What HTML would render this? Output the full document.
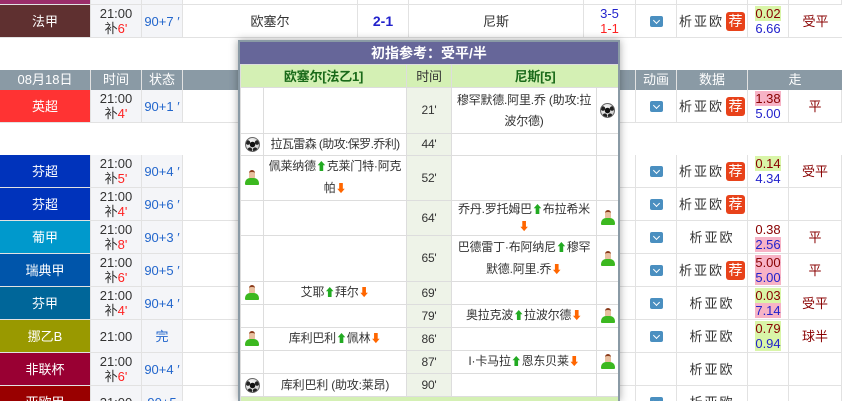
<!DOCTYPE html>
<html><head><meta charset="utf-8"><style>
*{margin:0;padding:0;box-sizing:border-box}
html,body{width:842px;height:401px;overflow:hidden}
body{background:#fff;font-family:"Liberation Sans","Noto Sans CJK SC",sans-serif;font-size:13px;color:#333;position:relative}
.r{position:absolute;left:0;width:842px;border-bottom:1px solid #e2e2e2;background:#fff}
.c{position:absolute;top:0;height:100%;border-right:1px solid #e2e2e2;display:flex;align-items:center;justify-content:center;text-align:center;line-height:15px}
.c>div{white-space:nowrap}
.lg{left:0;width:91px;color:#fff}
.tm{left:91px;width:51px;background:#f4f5f8}
.st{left:142px;width:41px;color:#2266cc;background:#f4f5f8}
.hm{left:183px;width:175px}
.sc{left:358px;width:51px}
.aw{left:409px;width:175px}
.hf{left:584px;width:52px}
.an{left:636px;width:41px}
.da{left:677px;width:71px;letter-spacing:2px}
.od{left:748px;width:41px}
.hc{left:789px;width:53px}
.red{color:#f22}
.dd{display:inline-block;width:13px;height:11px;background:#4a8fc0;border-radius:2px;position:relative;vertical-align:middle}
.dd:after{content:"";position:absolute;left:4px;top:2px;width:4px;height:4px;border-right:1.5px solid #fff;border-bottom:1.5px solid #fff;transform:rotate(45deg)}
.jian{display:inline-block;background:#e8421a;color:#fff;border-radius:3px;width:19px;height:19px;line-height:19px;font-size:14px;letter-spacing:0;margin-left:2px}
.o1{color:#800}.o2{color:#22c}
.gy{background:#d9f5a8}.pk{background:#f7b3c6}
.hd{position:absolute;top:70px;left:0;width:842px;height:20px;background:#8a9aa5;color:#fff}
.hd div{position:absolute;top:0;height:20px;line-height:20px;text-align:center;border-right:1px solid #e2e2e2}
#pop{position:absolute;left:238px;top:40px;width:382px;height:361px;border:2px solid #8a9aa5;border-bottom:none;background:#fff;box-shadow:0 0 8px rgba(0,0,0,.35);overflow:hidden}
#pop table{border-collapse:collapse;width:378px;table-layout:fixed;font-size:12px;letter-spacing:-0.2px}
#pop td{border:1px solid #ddd;text-align:center;line-height:21px;padding:0;overflow:hidden}
.tt{height:22px;background:#666699;color:#fff;font-weight:bold;text-align:center;line-height:22px;font-size:14px}
.ph td{background:#d4f0b4;color:#1a6a1a;font-weight:bold;height:23px;font-size:13px}
.tc{background:#eef3e8}
.ball{display:inline-block;width:15px;height:15px;border-radius:50%;background:radial-gradient(circle at 50% 50%,#111 0 2.5px,transparent 3px),radial-gradient(circle at 15% 35%,#222 0 2px,transparent 2.5px),radial-gradient(circle at 85% 35%,#222 0 2px,transparent 2.5px),radial-gradient(circle at 30% 90%,#222 0 2px,transparent 2.5px),radial-gradient(circle at 70% 90%,#222 0 2px,transparent 2.5px),radial-gradient(circle at 40% 35%,#fff,#bbb);border:1px solid #666;vertical-align:middle}
.pl{display:inline-block;width:14px;height:16px;position:relative;vertical-align:middle}
.pl:before{content:"";position:absolute;left:4px;top:0;width:6px;height:7px;border-radius:3px 3px 2px 2px;background:#e8c0a0;border-top:2px solid #8a3a1a}
.pl:after{content:"";position:absolute;left:0;top:8px;width:14px;height:7px;border-radius:5px 5px 1px 1px;background:#3cb820}
.up{color:#2a2;font-size:11px}.dn{color:#f60;font-size:11px}
</style></head><body>

<div class="r" style="top:-28px;height:33px"><div class="c lg" style="background:#9b2d6a"></div><div class="c tm"></div><div class="c st"></div><div class="c hm"></div><div class="c sc"></div><div class="c aw"></div><div class="c hf"></div><div class="c an"></div><div class="c da"></div><div class="c od"></div><div class="c hc"></div></div>

<div class="r" style="top:5px;height:33px"><div class="c lg" style="background:#5f3030"><div>法甲</div></div><div class="c tm"><div>21:00<br>补<span class="red">6'</span></div></div><div class="c st"><div>90+7 ′</div></div><div class="c hm"><div>欧塞尔</div></div><div class="c sc" style="color:#22c;font-weight:bold;font-size:14px"><div>2-1</div></div><div class="c aw"><div>尼斯</div></div><div class="c hf" style="color:#22c"><div>3-5<br><span class="red">1-1</span></div></div><div class="c an"><span class="dd"></span></div><div class="c da"><div>析亚欧<span class="jian">荐</span></div></div><div class="c od"><div><span class="o1 gy">0.02</span><br><span class="o2">6.66</span></div></div><div class="c hc" style="color:#800;border:none"><div>受平</div></div></div>

<div class="hd"><div style="left:0;width:91px">08月18日</div><div style="left:91px;width:51px">时间</div><div style="left:142px;width:41px">状态</div><div style="left:183px;width:453px"></div><div style="left:636px;width:41px">动画</div><div style="left:677px;width:71px">数据</div><div style="left:748px;width:94px;border:none">走</div></div>

<div class="r" style="top:90px;height:33px"><div class="c lg" style="background:#ff3333"><div>英超</div></div><div class="c tm"><div>21:00<br>补<span class="red">4'</span></div></div><div class="c st"><div>90+1 ′</div></div><div class="c hm"></div><div class="c sc"></div><div class="c aw"></div><div class="c hf"></div><div class="c an"><span class="dd"></span></div><div class="c da"><div>析亚欧<span class="jian">荐</span></div></div><div class="c od"><div><span class="o1 pk">1.38</span><br><span class="o2">5.00</span></div></div><div class="c hc" style="color:#800"><div>平</div></div></div>

<div class="r" style="top:155px;height:33px"><div class="c lg" style="background:#0033bb"><div>芬超</div></div><div class="c tm"><div>21:00<br>补<span class="red">5'</span></div></div><div class="c st"><div>90+4 ′</div></div><div class="c hm"></div><div class="c sc"></div><div class="c aw"></div><div class="c hf"></div><div class="c an"><span class="dd"></span></div><div class="c da"><div>析亚欧<span class="jian">荐</span></div></div><div class="c od"><div><span class="o1 gy">0.14</span><br><span class="o2">4.34</span></div></div><div class="c hc" style="color:#800"><div>受平</div></div></div>
<div class="r" style="top:188px;height:33px"><div class="c lg" style="background:#0033bb"><div>芬超</div></div><div class="c tm"><div>21:00<br>补<span class="red">4'</span></div></div><div class="c st"><div>90+6 ′</div></div><div class="c hm"></div><div class="c sc"></div><div class="c aw"></div><div class="c hf"></div><div class="c an"><span class="dd"></span></div><div class="c da"><div>析亚欧<span class="jian">荐</span></div></div><div class="c od"></div><div class="c hc"></div></div>
<div class="r" style="top:221px;height:33px"><div class="c lg" style="background:#0099cc"><div>葡甲</div></div><div class="c tm"><div>21:00<br>补<span class="red">8'</span></div></div><div class="c st"><div>90+3 ′</div></div><div class="c hm"></div><div class="c sc"></div><div class="c aw"></div><div class="c hf"></div><div class="c an"><span class="dd"></span></div><div class="c da"><div>析亚欧</div></div><div class="c od"><div><span class="o1">0.38</span><br><span class="o2 pk">2.56</span></div></div><div class="c hc" style="color:#800"><div>平</div></div></div>
<div class="r" style="top:254px;height:33px"><div class="c lg" style="background:#0055aa"><div>瑞典甲</div></div><div class="c tm"><div>21:00<br>补<span class="red">6'</span></div></div><div class="c st"><div>90+5 ′</div></div><div class="c hm"></div><div class="c sc"></div><div class="c aw"></div><div class="c hf"></div><div class="c an"><span class="dd"></span></div><div class="c da"><div>析亚欧<span class="jian">荐</span></div></div><div class="c od"><div><span class="o1 pk">5.00</span><br><span class="o2 pk">5.00</span></div></div><div class="c hc" style="color:#800"><div>平</div></div></div>
<div class="r" style="top:287px;height:33px"><div class="c lg" style="background:#006699"><div>芬甲</div></div><div class="c tm"><div>21:00<br>补<span class="red">4'</span></div></div><div class="c st"><div>90+4 ′</div></div><div class="c hm"></div><div class="c sc"></div><div class="c aw"></div><div class="c hf"></div><div class="c an"><span class="dd"></span></div><div class="c da"><div>析亚欧</div></div><div class="c od"><div><span class="o1 gy">0.03</span><br><span class="o2 pk">7.14</span></div></div><div class="c hc" style="color:#800"><div>受平</div></div></div>
<div class="r" style="top:320px;height:33px"><div class="c lg" style="background:#999900"><div>挪乙B</div></div><div class="c tm"><div>21:00</div></div><div class="c st"><div>完</div></div><div class="c hm"></div><div class="c sc"></div><div class="c aw"></div><div class="c hf"></div><div class="c an"><span class="dd"></span></div><div class="c da"><div>析亚欧</div></div><div class="c od"><div><span class="o1 gy">0.79</span><br><span class="o2 gy">0.94</span></div></div><div class="c hc" style="color:#800"><div>球半</div></div></div>
<div class="r" style="top:353px;height:33px"><div class="c lg" style="background:#990033"><div>非联杯</div></div><div class="c tm"><div>21:00<br>补<span class="red">6'</span></div></div><div class="c st"><div>90+4 ′</div></div><div class="c hm"></div><div class="c sc"></div><div class="c aw"></div><div class="c hf"></div><div class="c an"></div><div class="c da"><div>析亚欧</div></div><div class="c od"></div><div class="c hc"></div></div>
<div class="r" style="top:386px;height:33px"><div class="c lg" style="background:#990000"><div>亚欧甲</div></div><div class="c tm"><div>21:00</div></div><div class="c st"><div>90+5</div></div><div class="c hm"></div><div class="c sc"></div><div class="c aw"></div><div class="c hf"></div><div class="c an"><span class="dd"></span></div><div class="c da"><div>析亚欧</div></div><div class="c od"></div><div class="c hc"></div></div>

<div id="pop">
<div class="tt">初指参考：受平/半</div>
<table>
<colgroup><col style="width:23px"><col style="width:143px"><col style="width:45px"><col style="width:145px"><col style="width:22px"></colgroup>
<tr class="ph"><td colspan="2">欧塞尔[法乙1]</td><td style="color:#333;font-weight:normal">时间</td><td colspan="2">尼斯[5]</td></tr>
<tr style="height:46px"><td></td><td></td><td class="tc">21'</td><td>穆罕默德.阿里.乔 (助攻:拉波尔德)</td><td><span class="ball"></span></td></tr>
<tr style="height:22px"><td><span class="ball"></span></td><td style="white-space:nowrap;letter-spacing:-0.6px">拉瓦雷森 (助攻:保罗.乔利)</td><td class="tc">44'</td><td></td><td></td></tr>
<tr style="height:45px"><td><span class="pl"></span></td><td>佩莱纳德<span class="up">⬆</span>克莱门特·阿克帕<span class="dn">⬇</span></td><td class="tc">52'</td><td></td><td></td></tr>
<tr style="height:33px"><td></td><td></td><td class="tc">64'</td><td style="line-height:16px">乔丹.罗托姆巴<span class="up">⬆</span>布拉希米<br><span class="dn">⬇</span></td><td><span class="pl"></span></td></tr>
<tr style="height:46px"><td></td><td></td><td class="tc">65'</td><td>巴德雷丁·布阿纳尼<span class="up">⬆</span>穆罕默德.阿里.乔<span class="dn">⬇</span></td><td><span class="pl"></span></td></tr>
<tr style="height:23px"><td><span class="pl"></span></td><td>艾耶<span class="up">⬆</span>拜尔<span class="dn">⬇</span></td><td class="tc">69'</td><td></td><td></td></tr>
<tr style="height:23px"><td></td><td></td><td class="tc">79'</td><td style="white-space:nowrap">奥拉克波<span class="up">⬆</span>拉波尔德<span class="dn">⬇</span></td><td><span class="pl"></span></td></tr>
<tr style="height:23px"><td><span class="pl"></span></td><td>库利巴利<span class="up">⬆</span>佩林<span class="dn">⬇</span></td><td class="tc">86'</td><td></td><td></td></tr>
<tr style="height:23px"><td></td><td></td><td class="tc">87'</td><td style="white-space:nowrap">I·卡马拉<span class="up">⬆</span>恩东贝莱<span class="dn">⬇</span></td><td><span class="pl"></span></td></tr>
<tr style="height:23px"><td><span class="ball"></span></td><td>库利巴利 (助攻:莱昂)</td><td class="tc">90'</td><td></td><td></td></tr>
<tr style="height:20px"><td colspan="5" style="background:#d4f0b4"></td></tr>
</table>
</div>
</body></html>
